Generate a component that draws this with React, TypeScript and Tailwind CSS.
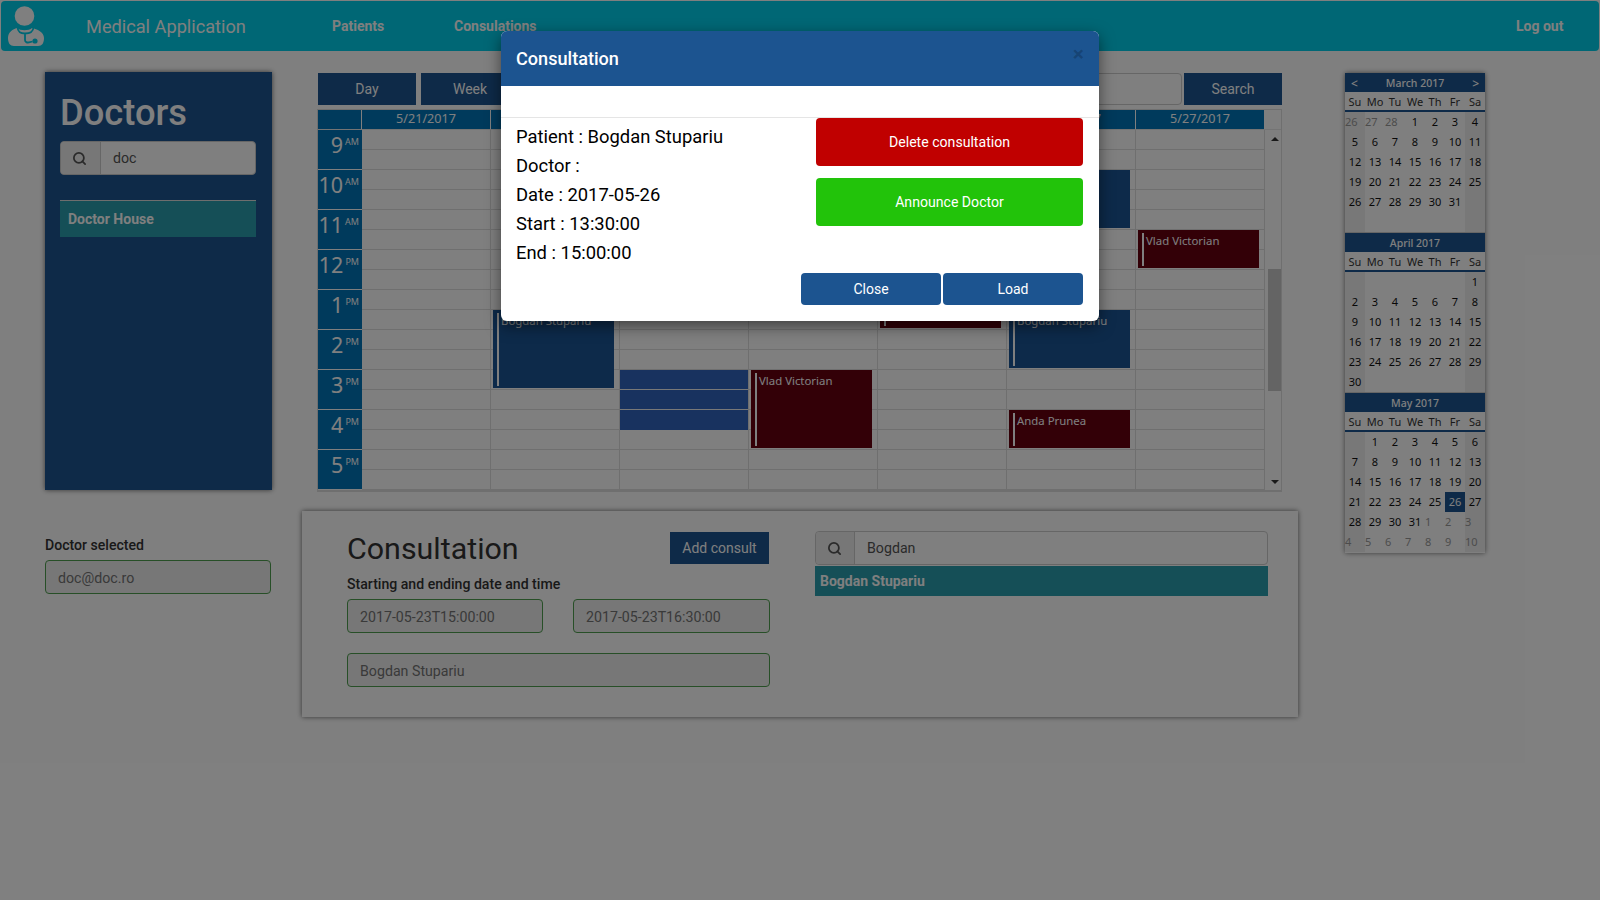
import { Search } from "lucide-react";

const NAVY = "bg-[#1c5490]";

function Logo() {
  return (
    <svg width="40" height="44" viewBox="6 4 40 44" className="shrink-0">
      <circle cx="24.5" cy="16" r="9.8" fill="#fff" />
      <path d="M8 38C8 32 13 29 17 28C20 31 29 31 32 28C37 29 44 32 44 38C44 43 42 46 38 46L14 46C10 46 8 43 8 38Z" fill="#fff" />
      <path d="M17.5 27.5C18 33 22 33.5 25 33.5C28 33.5 33 33 33.5 27.5M25 33.5L25 40C25 42 27 42.8 29 42.4L32.5 41.5" fill="none" stroke="#00cfea" strokeWidth="1.8" />
      <circle cx="35" cy="41" r="2.6" fill="#00cfea" />
    </svg>
  );
}

function SearchBox({ value, addon, width }: { value: string; addon: string; width: string }) {
  return (
    <div className={`flex h-[34px] rounded-[4px] border border-[#cccccc] bg-white ${width}`}>
      <div className={`flex h-full items-center justify-center rounded-l-[4px] border-r border-[#cccccc] bg-[#eeeeee] pr-[2px] ${addon}`}>
        <Search size={15} strokeWidth={2.8} className="text-[#555555]" />
      </div>
      <input readOnly value={value} className="min-w-0 flex-1 bg-transparent px-3 pt-[2px] text-[14.2px] text-[#555555] outline-none" />
    </div>
  );
}

function GreenInput({ value, width }: { value: string; width: string }) {
  return (
    <input
      readOnly
      value={value}
      className={`h-[34px] rounded-[4px] border border-[#4f9f4f] bg-[#eeeeee] px-3 pt-[2px] text-[14.2px] text-[#747474] outline-none ${width}`}
    />
  );
}

type Ev = { col: number; top: number; h: number; text: string; color: string };
const EVENTS: Ev[] = [
  { col: 1, top: 180, h: 78, text: "Bogdan Stupariu", color: "bg-[#1a5494]" },
  { col: 3, top: 240, h: 78, text: "Vlad Victorian", color: "bg-[#66000f]" },
  { col: 4, top: 160, h: 38, text: "Vlad Victorian", color: "bg-[#66000f]" },
  { col: 5, top: 40, h: 58, text: "Anda Prunea", color: "bg-[#1a5494]" },
  { col: 5, top: 180, h: 58, text: "Bogdan Stupariu", color: "bg-[#1a5494]" },
  { col: 5, top: 280, h: 38, text: "Anda Prunea", color: "bg-[#66000f]" },
  { col: 6, top: 100, h: 38, text: "Vlad Victorian", color: "bg-[#66000f]" },
];
const DATES = ["5/21/2017", "5/22/2017", "5/23/2017", "5/24/2017", "5/25/2017", "5/26/2017", "5/27/2017"];
const HOURS = [["9", "AM"], ["10", "AM"], ["11", "AM"], ["12", "PM"], ["1", "PM"], ["2", "PM"], ["3", "PM"], ["4", "PM"], ["5", "PM"]];

function Scheduler() {
  return (
    <div className="mt-[4px] w-[965px] border-t border-r border-b-2 border-l border-[#dedede] font-['Noto_Sans',sans-serif]">
      <div className="flex h-[20px] border-b border-[#e8e8e8] text-white">
        <div className="w-[44px] border-r border-[#ffffff] bg-[#0075b9]" />
        {DATES.map((d) => (
          <div key={d} className="flex w-[129px] items-center justify-center border-r border-[#ffffff] bg-[#0075b9] text-[12.6px] leading-none">
            {d}
          </div>
        ))}
        <div className="flex-1" />
      </div>
      <div className="flex h-[360px]">
        <div className="w-[44px]">
          {HOURS.map(([h, s]) => (
            <div key={h} className="flex h-[40px] justify-end border-b border-[#ffffff] bg-[#0075b9] pr-[3px] text-white">
              <span className="mt-[1px] text-[21.5px] leading-[28px]">{h}</span>
              <span className="ml-[2px] mt-[6px] text-[9px] leading-[12px]">{s}</span>
            </div>
          ))}
        </div>
        {DATES.map((d, c) => (
          <div key={d} className="relative w-[129px] border-r border-[#dedede]">
            {Array.from({ length: 18 }, (_, i) => (
              <div
                key={i}
                className={`h-[20px] border-b ${c === 2 && i >= 12 && i <= 14 ? (i === 14 ? "border-transparent bg-[#3064be]" : "border-[#f0f0f0] bg-[#3064be]") : "border-[#dedede]"}`}
              />
            ))}
            {EVENTS.filter((e) => e.col === c).map((e) => (
              <div
                key={e.text + e.top}
                className={`absolute left-[2px] flex w-[121px] pl-[4px] pt-[3px] text-[11.4px] leading-[16px] text-white ${e.color}`}
                style={{ top: e.top, height: e.h }}
              >
                <div className="mr-[2px] w-[2px] bg-white" style={{ height: e.h - 5 }} />
                <span>{e.text}</span>
              </div>
            ))}
          </div>
        ))}
        <div className="relative flex-1 bg-[#ffffff]">
          <div className="absolute left-[6px] top-[7px] h-0 w-0 border-x-[4px] border-b-[4px] border-x-transparent border-b-[#333333]" />
          <div className="absolute left-[3px] top-[139px] h-[122px] w-[13px] bg-[#c8c8c8]" />
          <div className="absolute bottom-[6px] left-[6px] h-0 w-0 border-x-[4px] border-t-[4px] border-x-transparent border-t-[#333333]" />
        </div>
      </div>
    </div>
  );
}

type Cell = { d: number; other?: boolean; sel?: boolean } | null;
const range = (a: number, b: number, other = false): Cell[] => Array.from({ length: b - a + 1 }, (_, i) => ({ d: a + i, other }));
const fill = (cells: Cell[]): Cell[] => [...cells, ...Array.from({ length: 42 - cells.length }, () => null)];

const MONTHS: { title: string; nav?: boolean; cells: Cell[] }[] = [
  { title: "March 2017", nav: true, cells: fill([...range(26, 28, true), ...range(1, 31)]) },
  { title: "April 2017", cells: fill([null, null, null, null, null, null, ...range(1, 30)]) },
  {
    title: "May 2017",
    cells: [null, ...range(1, 31).map((c) => (c && c.d === 26 ? { ...c, sel: true } : c)), ...range(1, 10, true)],
  },
];
const DOW = ["Su", "Mo", "Tu", "We", "Th", "Fr", "Sa"];

function MiniCalendar() {
  return (
    <div className="mt-px w-[140px] self-start bg-white font-['Noto_Sans',sans-serif] shadow-[0_0_5px_rgba(0,0,0,0.55)]">
      {MONTHS.map((m) => (
        <div key={m.title} className="h-[160px] border-b border-[#cccccc] last:border-b-0">
          <div className="flex h-[19px] items-center justify-between bg-[#1c5490] px-[6px] pt-[2px] text-[10.5px] font-medium leading-none text-white">
            <span className="w-[8px] text-[12px]">{m.nav ? "<" : ""}</span>
            <span>{m.title}</span>
            <span className="w-[8px] text-right text-[12px]">{m.nav ? ">" : ""}</span>
          </div>
          <div className="grid h-[20px] grid-cols-7 border-b-2 border-[#1c5490] text-[11px] leading-none text-[#333333]">
            {DOW.map((d) => (
              <div key={d} className="flex items-center justify-center">{d}</div>
            ))}
          </div>
          <div className="grid grid-cols-7">
            {m.cells.map((c, i) => {
              const weekend = i % 7 === 0 || i % 7 === 6;
              const base = "flex h-[20px] items-center pb-[2px] text-[11px] leading-none";
              const bg = c && c.sel ? "bg-[#1c5490] text-white" : weekend ? "bg-[#f0f0f0]" : "";
              const tone = c && c.other ? "justify-start text-[#999999]" : c && c.sel ? "justify-center" : "justify-center text-[#111111]";
              return (
                <div key={i} className={`${base} ${tone} ${bg}`}>
                  {c ? c.d : ""}
                </div>
              );
            })}
          </div>
        </div>
      ))}
    </div>
  );
}

export default function App() {
  return (
    <div className="relative h-[900px] w-[1600px] overflow-hidden bg-white pt-px font-['Roboto',sans-serif]">
      <nav className="mx-px flex h-[50px] items-center rounded-[4px] bg-[#00cfea] text-white">
        <div className="ml-[5px] w-[40px]"><Logo /></div>
        <span className="ml-[40px] w-[246px] pt-px text-[18.2px]">Medical Application</span>
        <span className="w-[122px] text-[14px] font-bold">Patients</span>
        <span className="w-[1062px] text-[14px] font-bold">Consulations</span>
        <span className="text-[14px] font-bold">Log out</span>
      </nav>

      <div className="flex pl-[45px] pt-[21px]">
        <div className="w-[1253px]">
          <div className="flex h-[419px]">
            <aside className="h-[418px] w-[227px] bg-[#1c5490] px-[15px] pt-[20px] text-white shadow-[0_0_5px_rgba(0,0,0,0.6)]">
              <h1 className="h-[49px] text-[36.3px] font-medium leading-[42px]">Doctors</h1>
              <SearchBox value="doc" addon="w-[40px]" width="w-[196px]" />
              <div className="mt-[25px] flex h-[37px] w-[196px] items-center border-t border-[#dddddd] bg-[#2a9eae] pl-[8px] text-[14px] font-bold">
                Doctor House
              </div>
            </aside>
            <div className="ml-[45px]">
              <div className="mt-px flex h-[32px] w-[965px] text-[14px] text-white">
                <button className="ml-px w-[98px] bg-[#1c5490]">Day</button>
                <button className="ml-[5px] w-[98px] bg-[#1c5490]">Week</button>
                <button className="ml-[5px] w-[98px] bg-[#1c5490]">Month</button>
                <input readOnly className="ml-[5px] min-w-0 flex-1 rounded-[4px] border border-[#cccccc] bg-white" />
                <button className="ml-[2px] w-[98px] bg-[#1c5490]">Search</button>
              </div>
              <Scheduler />
            </div>
          </div>

          <div className="mt-[20px] flex">
            <div className="w-[227px] pt-[26px]">
              <div className="text-[14.1px] font-medium leading-[16px] text-[#333333]">Doctor selected</div>
              <GreenInput value="doc@doc.ro" width="mt-[7px] w-[226px]" />
            </div>
            <section className="ml-[30px] flex h-[206px] w-[996px] bg-white pl-[45px] pt-[21px] shadow-[0_0_5px_rgba(0,0,0,0.6)]">
              <div className="w-[423px]">
                <div className="flex h-[32px] items-center justify-between">
                  <h2 className="mt-[2px] text-[30.4px] leading-[36px] text-[#333333]">Consultation</h2>
                  <button className="mr-px h-[32px] w-[99px] bg-[#1c5490] text-[14px] text-white">Add consult</button>
                </div>
                <div className="mt-[12px] text-[14.1px] font-medium leading-[16px] text-[#333333]">Starting and ending date and time</div>
                <div className="mt-[7px] flex justify-between">
                  <GreenInput value="2017-05-23T15:00:00" width="w-[196px]" />
                  <GreenInput value="2017-05-23T16:30:00" width="w-[197px]" />
                </div>
                <GreenInput value="Bogdan Stupariu" width="mt-[20px] w-[423px]" />
              </div>
              <div className="ml-[45px] w-[453px] pt-0">
                <SearchBox value="Bogdan" addon="w-[39px]" width="-mt-px w-[453px]" />
                <div className="mt-px flex h-[30px] items-center bg-[#2a9eae] pl-[5px] text-[14px] font-bold text-white">Bogdan Stupariu</div>
              </div>
            </section>
          </div>
        </div>
        <div className="ml-[47px]"><MiniCalendar /></div>
      </div>

      <div className="absolute inset-0 bg-black/50" />

      <div className="absolute left-[501px] top-[31px] h-[290px] w-[598px] overflow-hidden rounded-[6px] bg-white shadow-[0_5px_15px_rgba(0,0,0,0.5)]">
        <div className="relative flex h-[55px] items-center bg-[#1c5490] pl-[15px] text-[18.1px] font-medium text-white">
          Consultation
          <span className="absolute right-[15px] top-[13px] text-[21px] font-bold leading-none text-black/20">×</span>
        </div>
        <div className="h-[32px] border-b border-[#e5e5e5]" />
        <div className="flex">
          <div className="w-[315px] pl-[15px] pt-[4px] text-[18.4px] leading-[29px] text-black">
            <div>Patient : Bogdan Stupariu</div>
            <div>Doctor :</div>
            <div>Date : 2017-05-26</div>
            <div>Start : 13:30:00</div>
            <div>End : 15:00:00</div>
          </div>
          <div className="w-[267px] text-[14.1px] text-white">
            <button className="h-[48px] w-full rounded-[4px] bg-[#c00000] pt-[2px]">Delete consultation</button>
            <button className="mt-[12px] h-[48px] w-full rounded-[4px] bg-[#22c30a] pt-[2px]">Announce Doctor</button>
          </div>
        </div>
        <div className="mt-[6px] flex justify-end gap-[2px] pr-[16px] text-[14px] text-white">
          <button className={`h-[32px] w-[140px] rounded-[4px] ${NAVY}`}>Close</button>
          <button className={`h-[32px] w-[140px] rounded-[4px] ${NAVY}`}>Load</button>
        </div>
      </div>
    </div>
  );
}
